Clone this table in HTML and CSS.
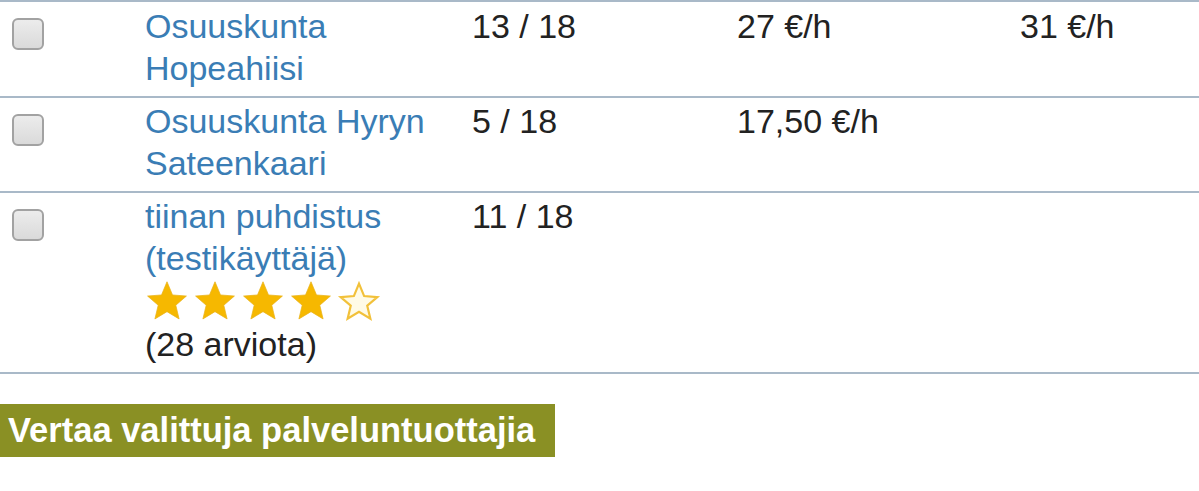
FILE: index.html
```html
<!DOCTYPE html>
<html lang="fi">
<head>
<meta charset="utf-8">
<link rel="stylesheet" href="styles.css">
</head>
<body>
<table class="providers">
  <colgroup>
    <col class="c-check"><col class="c-name"><col class="c-score"><col class="c-price"><col class="c-price2">
  </colgroup>
  <tbody>
    <tr>
      <td class="check"><input type="checkbox" class="cb"></td>
      <td class="name"><a href="#">Osuuskunta Hopeahiisi</a></td>
      <td>13 / 18</td>
      <td>27 €/h</td>
      <td>31 €/h</td>
    </tr>
    <tr>
      <td class="check"><input type="checkbox" class="cb"></td>
      <td class="name"><a href="#">Osuuskunta Hyryn Sateenkaari</a></td>
      <td>5 / 18</td>
      <td>17,50 €/h</td>
      <td></td>
    </tr>
    <tr>
      <td class="check"><input type="checkbox" class="cb"></td>
      <td class="name">
        <a href="#">tiinan puhdistus (testikäyttäjä)</a>
        <div class="stars">
          <svg class="star" viewBox="0 0 24 24"><path class="full" d="M12 1.5l3 7.2 7.6.6-5.8 5 1.8 7.5L12 17.8l-6.6 4 1.8-7.5-5.8-5 7.6-.6z"/></svg>
          <svg class="star" viewBox="0 0 24 24"><path class="full" d="M12 1.5l3 7.2 7.6.6-5.8 5 1.8 7.5L12 17.8l-6.6 4 1.8-7.5-5.8-5 7.6-.6z"/></svg>
          <svg class="star" viewBox="0 0 24 24"><path class="full" d="M12 1.5l3 7.2 7.6.6-5.8 5 1.8 7.5L12 17.8l-6.6 4 1.8-7.5-5.8-5 7.6-.6z"/></svg>
          <svg class="star" viewBox="0 0 24 24"><path class="full" d="M12 1.5l3 7.2 7.6.6-5.8 5 1.8 7.5L12 17.8l-6.6 4 1.8-7.5-5.8-5 7.6-.6z"/></svg>
          <svg class="star" viewBox="0 0 24 24"><path class="empty" d="M12 2.5l2.8 6.8 7.2.6-5.5 4.7 1.7 7.1L12 17.9l-6.2 3.8 1.7-7.1L2 9.9l7.2-.6z"/></svg>
        </div>
        <div class="count">(28 arviota)</div>
      </td>
      <td>11 / 18</td>
      <td></td>
      <td></td>
    </tr>
  </tbody>
</table>
<button class="compare" type="button">Vertaa valittuja palveluntuottajia</button>
</body>
</html>
```

FILE: styles.css
```css
html, body {
  margin: 0;
  padding: 0;
  background: #ffffff;
  overflow: hidden;
}
body {
  font-family: "Liberation Sans", Arial, sans-serif;
  font-size: 34px;
  line-height: 42px;
  color: #222222;
}
.providers {
  border-collapse: collapse;
  table-layout: fixed;
  width: 1199px;
}
.c-check { width: 145px; }
.c-name { width: 327px; }
.c-score { width: 265px; }
.c-price { width: 283px; }
.c-price2 { width: 179px; }
.providers td {
  border-top: 2px solid #a9b9c8;
  border-bottom: 2px solid #a9b9c8;
  vertical-align: top;
  padding: 2px 0 7px 0;
  text-align: left;
}
.providers tr:first-child td {
  padding-top: 3px;
}
.providers td.check,
.providers tr:first-child td.check {
  padding-left: 12px;
  padding-top: 16px;
}
.cb {
  appearance: none;
  -webkit-appearance: none;
  display: block;
  margin: 0;
  width: 32px;
  height: 32px;
  border: 2px solid #a2a2a2;
  border-radius: 6px;
  background: linear-gradient(#ececec, #dadada);
  box-sizing: border-box;
}
.name a {
  color: #3a7db5;
  text-decoration: none;
}
.stars {
  display: flex;
  gap: 4px;
  height: 44px;
  align-items: center;
}
.star {
  width: 44px;
  height: 44px;
  display: block;
}
.star .full {
  fill: #f6b800;
  stroke: #e9b21a;
  stroke-width: 0.4;
}
.star .empty {
  fill: #fffbe6;
  stroke: #f2c13a;
  stroke-width: 1.2;
}
.count {
  color: #222222;
}
.compare {
  display: block;
  margin: 30px 0 0 0;
  padding: 0 20px 0 8px;
  height: 53px;
  border: none;
  background: #8a9024;
  color: #ffffff;
  font-family: "Liberation Sans", Arial, sans-serif;
  font-weight: bold;
  font-size: 34.5px;
  line-height: 53px;
  cursor: pointer;
}
```
